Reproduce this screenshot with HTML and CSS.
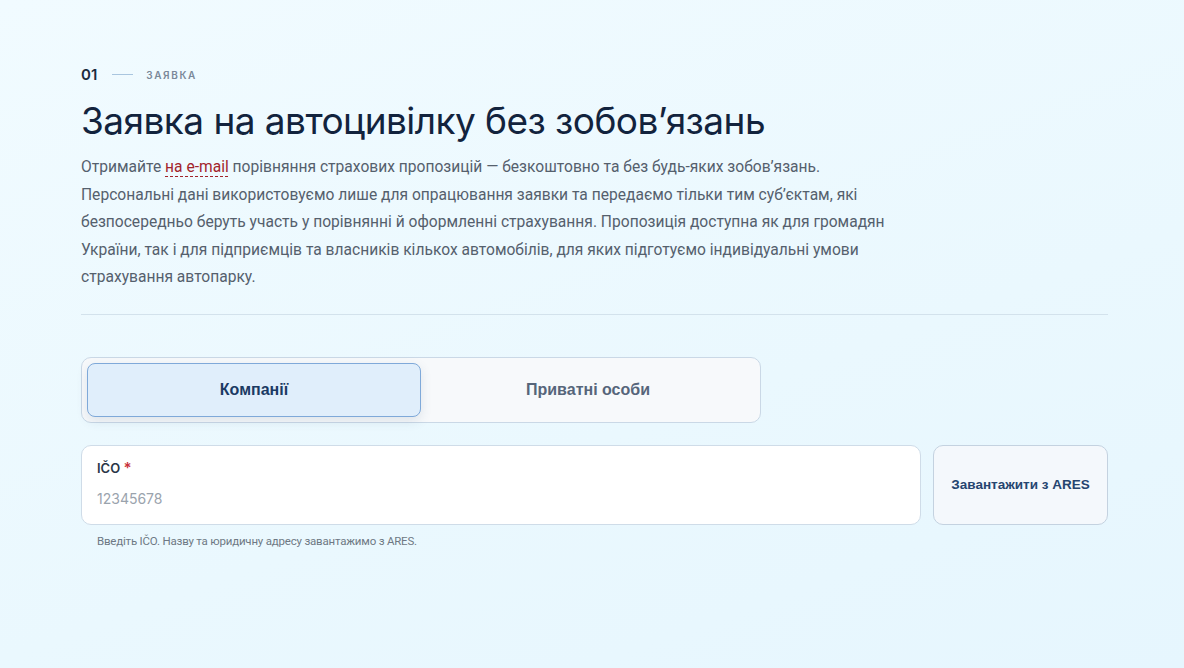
FILE: index.html
```html
<!DOCTYPE html>
<html lang="uk">
<head>
    <meta charset="UTF-8">
    <meta name="viewport" content="width=device-width, initial-scale=1.0">
    <title>Заявка на автоцивілку</title>
    <link rel="stylesheet" href="styles.css">
</head>
<body>
    <main class="page">
        <!-- Заголовок кроку -->
        <div class="step">
            <span class="step-num">01</span>
            <span class="step-line"></span>
            <span class="step-name">ЗАЯВКА</span>
        </div>
        <h1 class="title">Заявка на автоцивілку без зобов’язань</h1>
        <p class="lead">
            Отримайте <a href="#" class="lead-link">на e-mail</a> порівняння страхових пропозицій — безкоштовно та без будь-яких зобов’язань.
            Персональні дані використовуємо лише для опрацювання заявки та передаємо тільки тим суб’єктам, які
            безпосередньо беруть участь у порівнянні й оформленні страхування. Пропозиція доступна як для громадян
            України, так і для підприємців та власників кількох автомобілів, для яких підготуємо індивідуальні умови
            страхування автопарку.
        </p>
        <hr class="divider">

        <!-- Тип клієнта -->
        <div class="tabs">
            <button type="button" class="tab tab-active">Компанії</button>
            <button type="button" class="tab">Приватні особи</button>
        </div>

        <!-- IČO -->
        <div class="ico-row">
            <label class="field">
                <span class="field-label">IČO <span class="req">*</span></span>
                <input type="text" class="field-input" placeholder="12345678">
            </label>
            <button type="button" class="btn-ares">Завантажити з ARES</button>
        </div>
        <div class="hint">Введіть IČO. Назву та юридичну адресу завантажимо з ARES.</div>
    </main>
</body>
</html>
```

FILE: styles.css
```css
html, body {
    margin: 0;
    min-height: 100%;
}

body {
    background: linear-gradient(160deg, #f1fbff 0%, #eaf8fe 60%, #e6f6fe 100%);
    font-family: Roboto, "Liberation Sans", sans-serif;
    color: #0f2540;
    min-height: 668px;
}

.page {
    width: 1027px;
    margin-left: 81px;
    padding-top: 65px;
}

.step {
    display: flex;
    align-items: center;
}

.step-num {
    font-family: Inter, sans-serif;
    font-size: 15px;
    font-weight: 600;
    color: #1c2b3f;
}

.step-line {
    width: 21px;
    height: 1px;
    margin: 0 13px 0 15px;
    background-color: #a9c6df;
}

.step-name {
    font-family: Inter, sans-serif;
    font-size: 10px;
    font-weight: 600;
    letter-spacing: 1.6px;
    color: #7a8899;
}

.title {
    font-family: Inter, sans-serif;
    font-size: 37px;
    font-weight: 400;
    letter-spacing: -0.55px;
    color: #12233d;
    margin: 14px 0 0;
    line-height: 46px;
}

.lead {
    width: 830px;
    margin: 10px 0 0;
    font-size: 15.6px;
    line-height: 27.6px;
    color: #55606d;
}

.lead-link {
    color: #a2242b;
    text-decoration: underline dashed #a2242b;
    text-decoration-thickness: 1px;
    text-underline-offset: 4px;
}

.divider {
    border: none;
    height: 1px;
    background-color: #d3e2ec;
    margin: 22px 0 0;
}

.tabs {
    display: flex;
    width: 668px;
    margin-top: 42px;
    padding: 5px;
    background-color: #f7f9fb;
    border: 1px solid #cad8e6;
    border-radius: 10px;
}

.tab {
    flex: 1;
    height: 54px;
    border: 1px solid transparent;
    border-radius: 8px;
    background: none;
    font-family: "Liberation Sans", Arial, sans-serif;
    font-size: 16px;
    font-weight: bold;
    color: #56657a;
    cursor: pointer;
}

.tab-active {
    background-color: #e0eefb;
    border-color: #7fa9d9;
    color: #1b3a63;
    box-shadow: 0 4px 12px rgba(40, 70, 110, 0.12);
}

.ico-row {
    display: flex;
    gap: 12px;
    margin-top: 22px;
}

.field {
    flex: 1;
    display: flex;
    flex-direction: column;
    padding: 12px 15px 0;
    height: 80px;
    box-sizing: border-box;
    background-color: #fff;
    border: 1px solid #cfdce8;
    border-radius: 10px;
}

.field-label {
    font-family: Inter, sans-serif;
    font-size: 13px;
    font-weight: 600;
    color: #2a3647;
}

.req {
    color: #c8323a;
    font-size: 15px;
}

.field-input {
    border: none;
    outline: none;
    padding: 0;
    margin-top: 13px;
    font-family: Inter, sans-serif;
    font-size: 14px;
    color: #2a3647;
    background: none;
}

.field-input::placeholder {
    color: #9aa3ad;
}

.btn-ares {
    width: 175px;
    height: 80px;
    background-color: #f4f8fc;
    border: 1px solid #c4d2e0;
    border-radius: 10px;
    font-family: "Liberation Sans", Arial, sans-serif;
    font-size: 13.5px;
    font-weight: bold;
    color: #254570;
    cursor: pointer;
}

.hint {
    margin: 9px 0 0 16px;
    font-size: 11.5px;
    letter-spacing: -0.2px;
    color: #6e7884;
}
```
